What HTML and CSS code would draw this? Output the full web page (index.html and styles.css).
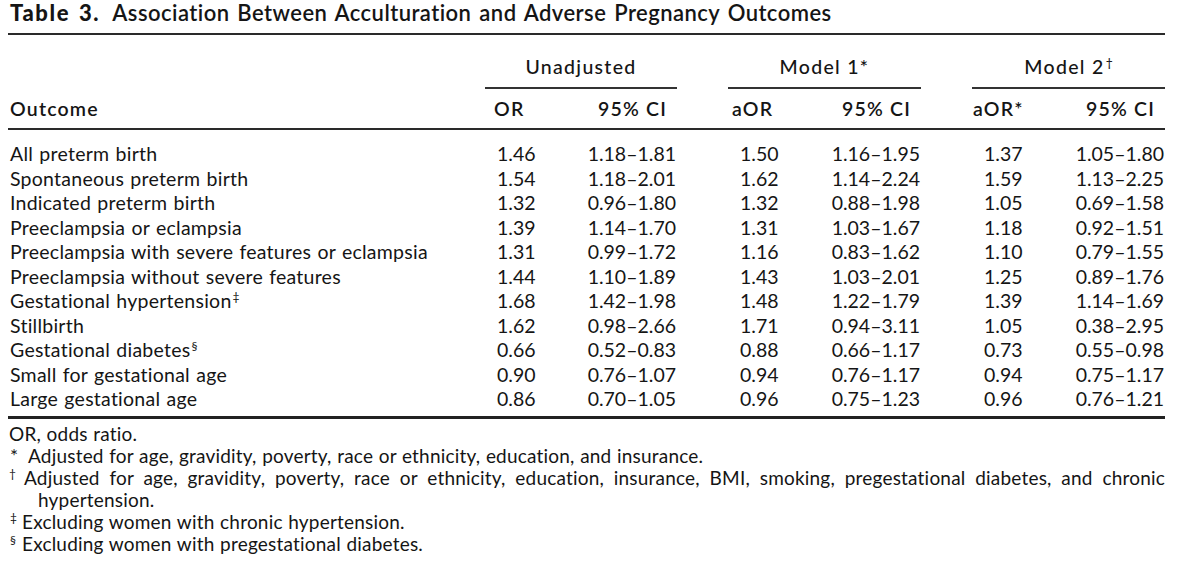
FILE: index.html
```html
<!DOCTYPE html>
<html lang="en">
<head>
<meta charset="utf-8">
<title>Table 3</title>
<link rel="stylesheet" href="styles.css">
</head>
<body>
<div class="page">
  <h1 class="title"><span class="label">Table 3.</span> Association Between Acculturation and Adverse Pregnancy Outcomes</h1>
  <table class="tbl">
    <colgroup>
      <col class="c-out"><col class="c-or"><col class="c-ci1"><col class="c-gap"><col class="c-or"><col class="c-ci"><col class="c-gap"><col class="c-or"><col class="c-ci">
    </colgroup>
    <thead>
      <tr class="spanrow">
        <th class="blank"></th>
        <th colspan="2" class="span">Unadjusted</th>
        <th class="blank"></th>
        <th colspan="2" class="span">Model 1*</th>
        <th class="blank"></th>
        <th colspan="2" class="span">Model 2<sup class="sup">†</sup></th>
      </tr>
      <tr class="headrow">
        <th class="h-out">Outcome</th>
        <th class="h-or g1">OR</th>
        <th class="h-ci">95% CI</th>
        <th class="h-gap"></th>
        <th class="h-or g2">aOR</th>
        <th class="h-ci">95% CI</th>
        <th class="h-gap"></th>
        <th class="h-or g3">aOR*</th>
        <th class="h-ci">95% CI</th>
      </tr>
    </thead>
    <tbody>
      <tr class="row first"><td class="out">All preterm birth</td><td class="or">1.46</td><td class="ci">1.18–1.81</td><td></td><td class="or">1.50</td><td class="ci">1.16–1.95</td><td></td><td class="or">1.37</td><td class="ci">1.05–1.80</td></tr>
      <tr class="row"><td class="out">Spontaneous preterm birth</td><td class="or">1.54</td><td class="ci">1.18–2.01</td><td></td><td class="or">1.62</td><td class="ci">1.14–2.24</td><td></td><td class="or">1.59</td><td class="ci">1.13–2.25</td></tr>
      <tr class="row"><td class="out">Indicated preterm birth</td><td class="or">1.32</td><td class="ci">0.96–1.80</td><td></td><td class="or">1.32</td><td class="ci">0.88–1.98</td><td></td><td class="or">1.05</td><td class="ci">0.69–1.58</td></tr>
      <tr class="row"><td class="out">Preeclampsia or eclampsia</td><td class="or">1.39</td><td class="ci">1.14–1.70</td><td></td><td class="or">1.31</td><td class="ci">1.03–1.67</td><td></td><td class="or">1.18</td><td class="ci">0.92–1.51</td></tr>
      <tr class="row"><td class="out">Preeclampsia with severe features or eclampsia</td><td class="or">1.31</td><td class="ci">0.99–1.72</td><td></td><td class="or">1.16</td><td class="ci">0.83–1.62</td><td></td><td class="or">1.10</td><td class="ci">0.79–1.55</td></tr>
      <tr class="row"><td class="out">Preeclampsia without severe features</td><td class="or">1.44</td><td class="ci">1.10–1.89</td><td></td><td class="or">1.43</td><td class="ci">1.03–2.01</td><td></td><td class="or">1.25</td><td class="ci">0.89–1.76</td></tr>
      <tr class="row"><td class="out">Gestational hypertension<sup class="sup">‡</sup></td><td class="or">1.68</td><td class="ci">1.42–1.98</td><td></td><td class="or">1.48</td><td class="ci">1.22–1.79</td><td></td><td class="or">1.39</td><td class="ci">1.14–1.69</td></tr>
      <tr class="row"><td class="out">Stillbirth</td><td class="or">1.62</td><td class="ci">0.98–2.66</td><td></td><td class="or">1.71</td><td class="ci">0.94–3.11</td><td></td><td class="or">1.05</td><td class="ci">0.38–2.95</td></tr>
      <tr class="row"><td class="out">Gestational diabetes<sup class="sup">§</sup></td><td class="or">0.66</td><td class="ci">0.52–0.83</td><td></td><td class="or">0.88</td><td class="ci">0.66–1.17</td><td></td><td class="or">0.73</td><td class="ci">0.55–0.98</td></tr>
      <tr class="row"><td class="out">Small for gestational age</td><td class="or">0.90</td><td class="ci">0.76–1.07</td><td></td><td class="or">0.94</td><td class="ci">0.76–1.17</td><td></td><td class="or">0.94</td><td class="ci">0.75–1.17</td></tr>
      <tr class="row last"><td class="out">Large gestational age</td><td class="or">0.86</td><td class="ci">0.70–1.05</td><td></td><td class="or">0.96</td><td class="ci">0.75–1.23</td><td></td><td class="or">0.96</td><td class="ci">0.76–1.21</td></tr>
    </tbody>
  </table>
  <div class="endrule"></div>
  <div class="notes">
    <p class="note">OR, odds ratio.</p>
    <p class="note"><span class="sym ast">*</span>Adjusted for age, gravidity, poverty, race or ethnicity, education, and insurance.</p>
    <p class="note just"><span class="sym dag">†</span>Adjusted for age, gravidity, poverty, race or ethnicity, education, insurance, BMI, smoking, pregestational diabetes, and chronic hypertension.</p>
    <p class="note"><span class="sym small">‡</span>Excluding women with chronic hypertension.</p>
    <p class="note"><span class="sym small">§</span>Excluding women with pregestational diabetes.</p>
  </div>
</div>
</body>
</html>
```
FILE: styles.css
```css
* { box-sizing: border-box; }

html, body {
  margin: 0;
  padding: 0;
  background: #ffffff;
}

body {
  font-family: Lato, "Open Sans", "Liberation Sans", sans-serif;
  color: #151515;
}

.page {
  width: 1200px;
  height: 569px;
  overflow: hidden;
}

/* ---------- title ---------- */
.title {
  margin: 0 0 0 8px;
  width: 1157px;
  padding: 0 0 7px 2px;
  font-size: 22px;
  line-height: 26px;
  font-weight: 600;
  letter-spacing: 0.45px;
  word-spacing: 2px;
  border-bottom: 2px solid #2a2a2a;
  white-space: nowrap;
}

.title .label {
  font-weight: 900;
  letter-spacing: 1.6px;
  margin-right: 5px;
}

/* ---------- table ---------- */
.tbl {
  margin-left: 8px;
  width: 1157px;
  table-layout: fixed;
  border-collapse: separate;
  border-spacing: 0;
  font-size: 19.5px;
}

.c-out { width: 477px; }
.c-or { width: 80px; }
.c-ci1 { width: 112px; }
.c-ci { width: 113px; }
.c-gap { width: 51px; }

.tbl th,
.tbl td {
  padding: 0;
  white-space: nowrap;
  line-height: 24px;
  font-weight: 400;
  text-align: left;
}

.spanrow th {
  padding-top: 20px;
  padding-bottom: 8px;
}

.spanrow .span {
  text-align: center;
  font-weight: 500;
  letter-spacing: 1.3px;
  border-bottom: 2px solid #333;
}

.headrow th {
  padding-top: 8px;
  padding-bottom: 7px;
  font-weight: 600;
  letter-spacing: 1.2px;
  border-bottom: 2px solid #2a2a2a;
}

.headrow .h-out { padding-left: 2px; }
.headrow .g1 { padding-left: 9px; }
.headrow .g2 { padding-left: 4px; }
.headrow .g3 { padding-left: 1px; }
.headrow .h-ci { text-align: right; padding-right: 10px; }

.row td { line-height: 24.5px; }
.row.first td { padding-top: 12px; }
.row.last td { padding-bottom: 4px; }

.row .out {
  padding-left: 2px;
  letter-spacing: 0.25px;
  word-spacing: 1px;
}
.row .or { padding-left: 12px; }
.row .ci { text-align: right; padding-right: 1px; }

.sup {
  font-size: 0.62em;
  line-height: 0;
  vertical-align: 0.55em;
  margin-left: 1px;
  letter-spacing: 0;
}

.endrule {
  margin-left: 8px;
  width: 1157px;
  height: 3px;
  background: #222222;
}

/* ---------- footnotes ---------- */
.notes {
  margin: 0 0 0 8px;
  width: 1157px;
  padding: 4px 0 0 1px;
  font-size: 19px;
  line-height: 22px;
  letter-spacing: 0.2px;
  word-spacing: 0.5px;
}

.note {
  margin: 0;
  padding-left: 29px;
  text-indent: -29px;
}

.note.just {
  text-align: justify;
}

.sym {
  display: inline-block;
  text-indent: 0;
  line-height: 0;
}

.sym.ast {
  width: 19px;
  padding-left: 1px;
}

.sym.dag {
  width: 15px;
  font-size: 12px;
  vertical-align: 7px;
}

.sym.small {
  width: 13px;
  padding-left: 1px;
  font-size: 12px;
  vertical-align: 7px;
}
```
